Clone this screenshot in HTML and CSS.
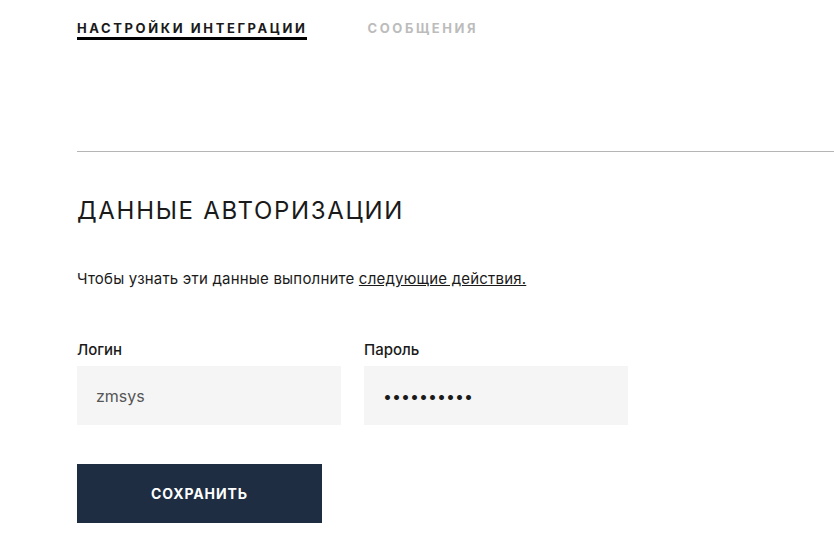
FILE: index.html
```html
<!DOCTYPE html>
<html lang="ru">

<head>
    <meta charset="UTF-8">
    <meta name="viewport" content="width=device-width, initial-scale=1.0">
    <title>Настройки интеграции</title>
    <link rel="stylesheet" href="styles.css">
</head>

<body>
    <div class="page">
        <nav class="tabs">
            <a class="tab active" href="#">Настройки интеграции</a>
            <a class="tab" href="#">Сообщения</a>
        </nav>

        <hr class="divider">

        <h2 class="title">Данные авторизации</h2>

        <p class="hint">Чтобы узнать эти данные выполните <a href="#">следующие действия.</a></p>

        <form class="auth-form" onsubmit="return false">
            <div class="fields">
                <label class="field">
                    <span class="field-label">Логин</span>
                    <input type="text" value="zmsys">
                </label>
                <label class="field">
                    <span class="field-label">Пароль</span>
                    <input type="password" value="1234567890">
                </label>
            </div>
            <button type="submit">Сохранить</button>
        </form>
    </div>
</body>

</html>
```

FILE: styles.css
```css
body {
    margin: 0;
    font-family: Inter, "Noto Sans", sans-serif;
    color: #1a1a1a;
    background: #fff;
}

.page {
    padding-left: 77px;
}

.tabs {
    display: flex;
    gap: 60px;
    padding-top: 20px;
    height: 20px;
}

.tab {
    font-size: 13px;
    font-weight: 700;
    letter-spacing: 2.6px;
    text-transform: uppercase;
    text-decoration: none;
    color: #bcbcbc;
    height: 20px;
    line-height: 16px;
}

.tab.active {
    color: #1a1a1a;
    border-bottom: 3px solid #000;
    height: 17px;
}

.divider {
    border: none;
    border-top: 1px solid #b5b5b5;
    margin: 111px 0 0 0;
}

.title {
    font-size: 24px;
    font-weight: 400;
    letter-spacing: 1.7px;
    text-transform: uppercase;
    margin: 44px 0 0 0;
    line-height: 30px;
}

.hint {
    font-size: 15px;
    letter-spacing: 0.2px;
    margin: 43px 0 0 0;
    line-height: 20px;
}

.hint a {
    color: inherit;
}

.fields {
    display: flex;
    gap: 23px;
    margin-top: 52px;
}

.field {
    display: flex;
    flex-direction: column;
    gap: 7px;
}

.field-label {
    font-size: 15px;
    font-weight: 500;
    line-height: 18px;
}

.field input {
    width: 264px;
    height: 59px;
    box-sizing: border-box;
    border: none;
    background: #f5f5f5;
    padding: 0 19px;
    font-family: inherit;
    font-size: 16px;
    color: #555;
    outline: none;
}

.field input[type="password"] {
    color: #1a1a1a;
    letter-spacing: 0;
}

button {
    margin-top: 39px;
    width: 245px;
    height: 59px;
    border: none;
    background: #1e2d42;
    color: #fff;
    font-family: inherit;
    font-size: 14px;
    font-weight: 700;
    letter-spacing: 0.9px;
    text-transform: uppercase;
}
```
